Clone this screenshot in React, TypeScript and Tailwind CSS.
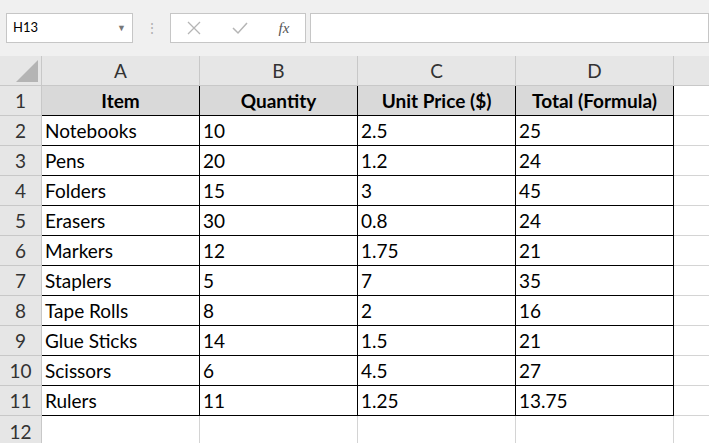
import React from "react";

const rows = [
  ["Notebooks", "10", "2.5", "25"],
  ["Pens", "20", "1.2", "24"],
  ["Folders", "15", "3", "45"],
  ["Erasers", "30", "0.8", "24"],
  ["Markers", "12", "1.75", "21"],
  ["Staplers", "5", "7", "35"],
  ["Tape Rolls", "8", "2", "16"],
  ["Glue Sticks", "14", "1.5", "21"],
  ["Scissors", "6", "4.5", "27"],
  ["Rulers", "11", "1.25", "13.75"],
];
const cols = ["A", "B", "C", "D"];

export default function App() {
  return (
    <div className="w-[709px] h-[443px] overflow-hidden bg-white text-black" style={{ fontFamily: "Lato, 'Open Sans', sans-serif" }}>
      <div className="h-[56px] bg-[#f0f0f0] flex items-center pl-[6px] gap-0">
        <div className="w-[127px] h-[30px] bg-white border border-[#c6c6c6] flex items-center justify-between px-[6px] text-[13px]">
          <span>H13</span>
          <span className="text-[#777] text-[9px]">▼</span>
        </div>
        <div className="w-[37px] flex justify-center text-[#b0b0b0] text-[14px] leading-none">⋮</div>
        <div className="w-[136px] h-[30px] bg-white border border-[#c6c6c6] flex items-center justify-around text-[#b5b5b5]">
          <svg width="14" height="14" viewBox="0 0 14 14"><path d="M1 1L13 13M13 1L1 13" stroke="#b5b5b5" strokeWidth="1.3" /></svg>
          <svg width="16" height="14" viewBox="0 0 16 14"><path d="M1 7L6 12L15 2" stroke="#b5b5b5" strokeWidth="1.5" fill="none" /></svg>
          <span className="italic text-[#555] text-[15px]" style={{ fontFamily: "'Liberation Serif', serif" }}>fx</span>
        </div>
        <div className="ml-[4px] flex-1 h-[30px] bg-white border border-[#c6c6c6]" />
      </div>
      <div className="grid grid-cols-[42px_158px_158px_158px_158px_1fr] text-[19px] leading-none">
        <div className="h-[30px] bg-[#e6e6e6] border-r border-b border-[#c8c8c8] relative">
          <svg className="absolute right-[3px] bottom-[3px]" width="22" height="22" viewBox="0 0 22 22"><path d="M22 0L22 22L0 22Z" fill="#b4b4b4" /></svg>
        </div>
        {cols.map((c) => (
          <div key={c} className="h-[30px] bg-[#e6e6e6] border-r border-b border-[#c8c8c8] flex items-center justify-center text-[#333]">{c}</div>
        ))}
        <div className="h-[30px] bg-[#e6e6e6] border-b border-[#c8c8c8]" />

        <div className="h-[30px] bg-[#e6e6e6] border-r border-b border-[#c8c8c8] flex items-center justify-center text-[#333]">1</div>
        {["Item", "Quantity", "Unit Price ($)", "Total (Formula)"].map((h) => (
          <div key={h} className="h-[30px] bg-[#d9d9d9] border-r border-b border-black flex items-center justify-center font-bold">{h}</div>
        ))}
        <div className="h-[30px] border-b border-[#d4d4d4]" />

        {rows.map((r, i) => (
          <React.Fragment key={i}>
            <div className="h-[30px] bg-[#e6e6e6] border-r border-b border-[#c8c8c8] flex items-center justify-center text-[#333]">{i + 2}</div>
            {r.map((v, j) => (
              <div key={j} className="h-[30px] border-r border-b border-black flex items-center pl-[3px]">{v}</div>
            ))}
            <div className="h-[30px] border-b border-[#d4d4d4]" />
          </React.Fragment>
        ))}
        <div className="h-[30px] bg-[#e6e6e6] border-r border-[#c8c8c8] flex items-center justify-center text-[#333]">12</div>
        {cols.map((c) => (
          <div key={c} className="h-[30px] border-r border-[#d4d4d4]" />
        ))}
        <div className="h-[30px]" />
      </div>
    </div>
  );
}
